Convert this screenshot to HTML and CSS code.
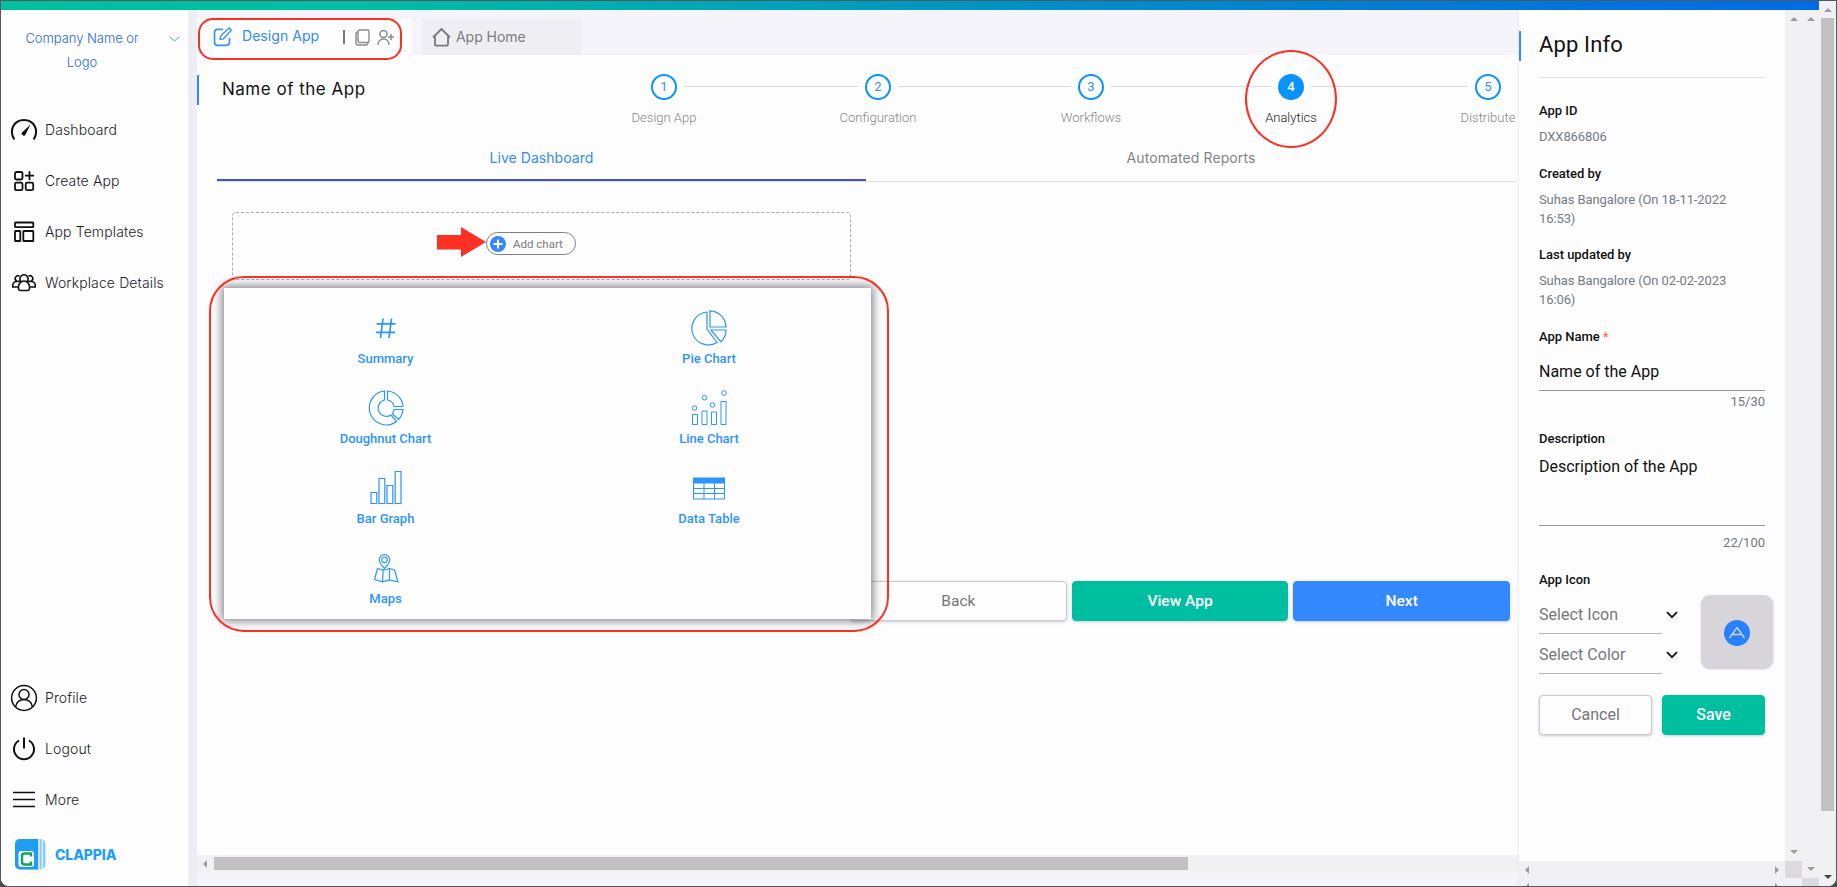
FILE: index.html
```html
<!DOCTYPE html>
<html lang="en">
<head>
<meta charset="utf-8">
<title>Name of the App</title>
<link rel="stylesheet" href="styles.css">
</head>
<body>
<div class="window">
  <div class="page">
    <div class="top-gradient"></div>
    <div class="columns">
      <aside class="sidebar">
        <div class="company"><span class="company-name">Company Name or<br>Logo</span>
          <svg class="company-caret" width="11" height="8" viewBox="0 0 11 8"><path d="M1 2l4.500 4 4.500-4" fill="none" stroke="#3e9bf5" stroke-width="1"/></svg>
        </div>
        <nav class="nav">
          <a class="nav-item"><svg width="28" height="28" viewBox="0 0 28 28" fill="none" stroke="#111" stroke-width="2"><path d="M4.300 23.500C-1.500 14 4 4 14 4s15.500 10 9.700 19.500"/><path d="M20.500 8.500l-8 7.500a2 2 0 1 0 3 2.500z" fill="#111" stroke="none"/></svg><span>Dashboard</span></a>
          <a class="nav-item"><svg width="28" height="28" viewBox="0 0 28 28" fill="none" stroke="#111" stroke-width="1.800"><rect x="5" y="5" width="7.500" height="7.500" rx="1.500"/><rect x="5" y="15.700" width="7.500" height="7.500" rx="1.500"/><rect x="15.700" y="15.700" width="7.500" height="7.500" rx="1.500"/><path d="M19.500 4.200v9M15 8.700h9"/></svg><span>Create App</span></a>
          <a class="nav-item"><svg width="28" height="28" viewBox="0 0 28 28" fill="none" stroke="#111" stroke-width="1.800"><rect x="5" y="4.500" width="18.300" height="4.700" rx=".6"/><rect x="5" y="13" width="5.300" height="10" rx=".6"/><rect x="13.300" y="13" width="10" height="10" rx=".6"/></svg><span>App Templates</span></a>
          <a class="nav-item"><svg width="28" height="28" viewBox="0 0 28 28" fill="none" stroke="#111" stroke-width="1.600"><path d="M10.700 12.200a4 4 0 1 1 6.600 0M8.500 19.500C7.500 9.500 20.500 9.500 19.500 19.500q0 2-2 2h-7q-2 0-2-2z"/><path d="M10 11.500a2.800 2.800 0 1 1-.500-4.300M18 11.500a2.800 2.800 0 1 0 .500-4.300M8 18H2.800c-.5-3.500 1-5.500 4-5.800M20 18h5.200c.5-3.500-1-5.500-4-5.800"/></svg><span>Workplace Details</span></a>
        </nav>
        <nav class="nav nav-bottom">
          <a class="nav-item"><svg width="28" height="28" viewBox="0 0 28 28" fill="none" stroke="#111" stroke-width="1.500"><circle cx="14" cy="14" r="12.400"/><circle cx="14" cy="10.500" r="5"/><path d="M5.500 23c1-10 16-10 17 0"/></svg><span>Profile</span></a>
          <a class="nav-item"><svg width="28" height="28" viewBox="0 0 28 28" fill="none" stroke="#111" stroke-width="2"><path d="M9 5.500a10 10 0 1 0 10 0M14 2.500v11"/></svg><span>Logout</span></a>
          <a class="nav-item"><svg width="28" height="28" viewBox="0 0 28 28" fill="none" stroke="#111" stroke-width="1.700"><path d="M3 6.500h22M3 13.500h22M3 20.500h22"/></svg><span>More</span></a>
        </nav>
        <div class="brand">
          <svg width="32" height="31" viewBox="0 0 32 31"><rect width="30.500" height="30.500" rx="5" fill="#8ccbfa"/><path d="M5 0h18v30.500H5a5 5 0 0 1-5-5V5a5 5 0 0 1 5-5z" fill="#1f9df1"/><path d="M24 0v30.500M27.300 0v30.500" stroke="#fff" stroke-width="1"/><rect x="3.500" y="12" width="15.500" height="16" rx="3" fill="#fff"/><path d="M16 17.500v-3H9.500q-2.500 0-2.500 2.500v6q0 2.500 2.500 2.500H16v-3" fill="none" stroke="#10a267" stroke-width="2.500"/></svg>
          <span>CLAPPIA</span>
        </div>
      </aside>

      <main class="main">
        <div class="tabbar">
          <div class="tab tab-active">
            <svg class="edit" width="20" height="20" viewBox="0 0 20 20" fill="none" stroke="#3593f7" stroke-width="1.700"><path d="M10 2.300H4.500Q1.500 2.300 1.500 5.300v10q0 3 3 3h9q3 0 3-3V11"/><path d="M7 12.500l.6-3.500 8.500-8 2.300 2.300-8 8.500z" stroke-width="1.300"/></svg>
            <span class="tab-title">Design App</span><i class="tab-sep"></i>
            <svg class="copy" width="15" height="17" viewBox="0 0 15 17" fill="none" stroke="#8b8b90" stroke-width="1.400"><rect x="3" y="1" width="11" height="12.500" rx="1.500"/><path d="M3 3Q1 3 1 5v9q0 2 2 2h8q1.500 0 2-2"/></svg>
            <svg class="adduser" width="18" height="17" viewBox="0 0 18 17" fill="none" stroke="#8b8b90" stroke-width="1.500"><circle cx="6.500" cy="5" r="3.500"/><path d="M1 16c0-8 11-8 11 0M14 5v6M11 8h6"/></svg>
          </div>
          <div class="tab tab-home">
            <svg width="20" height="20" viewBox="0 0 20 20" fill="none" stroke="#77777c" stroke-width="1.800" stroke-linejoin="round"><path d="M1 10.500l8.500-8.500 8.500 8.500M3 9.500v7.500q0 1.700 1.700 1.700h9.600q1.700 0 1.700-1.700V9.500"/></svg>
            <span>App Home</span>
          </div>
        </div>
        <div class="content">
          <header class="app-head">
            <h1 class="app-title">Name of the App</h1>
            <ol class="steps">
              <li class="step"><b>1</b><span>Design App</span></li><li class="bar b1"></li>
              <li class="step"><b>2</b><span>Configuration</span></li><li class="bar b2"></li>
              <li class="step"><b>3</b><span>Workflows</span></li><li class="bar b3"></li>
              <li class="step current"><b>4</b><span>Analytics</span></li><li class="bar b4"></li>
              <li class="step last"><b>5</b><span>Distribute</span></li>
            </ol>
          </header>
          <div class="subtabs"><a class="subtab on">Live Dashboard</a><a class="subtab">Automated Reports</a></div>
          <div class="dropzone">
            <button class="add-chart"><svg width="16" height="16" viewBox="0 0 16 16"><circle cx="8" cy="8" r="8" fill="#3488fb"/><path d="M8 3.500v9M3.500 8h9" stroke="#fff" stroke-width="2"/></svg><span>Add chart</span></button>
          </div>
          <div class="actions"><button class="btn">Back</button><button class="btn green">View App</button><button class="btn blue">Next</button></div>
        </div>
        <div class="hscroll"><i class="arrow left"></i><i class="hthumb"></i></div>

        <div class="chart-menu">
          <div class="chart"><svg width="36" height="36" viewBox="0 0 36 36" fill="none" stroke="#2c95fb" stroke-width="1.700"><path d="M15 8.500l-2.500 19.500M23.500 8.500l-2.500 19.500M8.500 13.800h19M8 22.300h19"/></svg><span>Summary</span></div>
          <div class="chart"><svg width="36" height="36" viewBox="0 0 36 36" fill="none" stroke="#2c95fb" stroke-width="1.200"><path d="M16 2A16.500 16.500 0 1 0 26 32.500L16 19z"/><path d="M19 .8V17h16A16.500 16.500 0 0 0 19 .8z"/><path d="M20 20h15a16 16 0 0 1-5 11.800z"/></svg><span>Pie Chart</span></div>
          <div class="chart"><svg width="36" height="36" viewBox="0 0 36 36" fill="none" stroke="#2c95fb" stroke-width="1.200"><path d="M16.500 1A17 17 0 1 0 28.500 31.500L23 25A8.300 8.300 0 1 1 16.500 10z"/><path d="M19.500 1V10A8.300 8.300 0 0 1 26 16.500h9A17 17 0 0 0 19.500 1z"/><path d="M26 19.500h9a17 17 0 0 1-4.500 10L24.500 24z"/></svg><span>Doughnut Chart</span></div>
          <div class="chart"><svg width="36" height="36" viewBox="0 0 36 36" fill="none" stroke="#2c95fb" stroke-width="1"><path d="M1.500 24.500h5v10h-5zM11 21h5v13.500h-5zM20.500 22h5v12.500h-5zM30 11.500h5v23h-5z"/><circle cx="3.500" cy="18" r="2.300"/><circle cx="13.500" cy="7.700" r="2.300"/><circle cx="21.500" cy="15" r="2.300"/><circle cx="33" cy="3" r="2.300"/></svg><span>Line Chart</span></div>
          <div class="chart"><svg width="36" height="36" viewBox="0 0 36 36" fill="none" stroke="#2c95fb" stroke-width="1.200"><path d="M3 22.500h5.800v11H3zM11 8.500h5.800v25H11zM19 15.500h5.800v18H19zM27.200 1.500H33v32h-5.800z"/></svg><span>Bar Graph</span></div>
          <div class="chart"><svg width="36" height="36" viewBox="0 0 36 36" fill="none" stroke="#2c95fb" stroke-width="1"><path d="M2.500 8.500h31v20.500h-31zM2.500 18.500h31M2.500 23.500h31M13 12v17M23.500 12v17"/><path d="M2 7.500h32v6H2z" fill="#2c95fb" stroke="none"/></svg><span>Data Table</span></div>
          <div class="chart"><svg width="36" height="36" viewBox="0 0 36 36" fill="none" stroke="#2c95fb" stroke-width="1.200" stroke-linejoin="round"><path d="M16.500 18.500Q11.200 13 11.200 10a5.300 5.300 0 0 1 10.600 0q0 3-5.300 8.500z"/><circle cx="16.500" cy="9.800" r="2.800"/><path d="M13 19.300l-3.500-.8-3 11 8 2.300 7-2 8.500 2.200-3.500-12-5-1.500-4.500 1.500-4-.7M14.500 31.800l.7-12M21.500 29.800V19"/></svg><span>Maps</span></div>
        </div>
      </main>

      <section class="info">
        <div class="info-body">
          <h2 class="info-title">App Info</h2>
          <div class="label l-first">App ID</div><div class="value">DXX866806</div>
          <div class="label">Created by</div><div class="value">Suhas Bangalore (On 18-11-2022 16:53)</div>
          <div class="label l-upd">Last updated by</div><div class="value">Suhas Bangalore (On 02-02-2023 16:06)</div>
          <div class="label">App Name <em>*</em></div>
          <div class="input">Name of the App</div><div class="count">15/30</div>
          <div class="label">Description</div>
          <div class="input area">Description of the App</div><div class="count c-area">22/100</div>
          <div class="label">App Icon</div>
          <div class="icon-row">
            <div class="selects">
              <div class="select"><span>Select Icon</span><svg width="12" height="8" viewBox="0 0 12 8"><path d="M1 1.200l5 5 5-5" fill="none" stroke="#111" stroke-width="1.700"/></svg></div>
              <div class="select"><span>Select Color</span><svg width="12" height="8" viewBox="0 0 12 8"><path d="M1 1.200l5 5 5-5" fill="none" stroke="#111" stroke-width="1.700"/></svg></div>
            </div>
            <div class="preview"><svg width="26" height="26" viewBox="0 0 26 26"><circle cx="13" cy="13" r="13" fill="#2681fb"/><path d="M5.500 18L13 7.500 20.500 18M8.500 14.500h9" fill="none" stroke="#d6d4d8" stroke-width="1.300"/></svg></div>
          </div>
          <div class="info-actions"><button class="btn cancel">Cancel</button><button class="btn green save">Save</button></div>
        </div>
        <div class="info-hscroll"><i class="arrow left"></i><i class="arrow right"></i></div>
        <div class="info-hscroll"><i class="arrow left"></i><i class="arrow right"></i></div>
      </section>
      <div class="vtrack inner"><i class="arrow up"></i><i class="arrow down"></i><i class="corner"></i></div>
      <div class="vtrack middle"><i class="arrow up"></i><i class="arrow down"></i><i class="corner"></i></div>
    </div>
  </div>
  <div class="vtrack outer"><i class="arrow up"></i><i class="vthumb"></i><i class="arrow down dark"></i></div>

  <div class="mark mark-tab"></div>
  <div class="mark mark-step"></div>
  <div class="mark mark-menu"></div>
  <svg class="mark-arrow" width="50" height="30" viewBox="0 0 50 30"><path d="M0 8h24V0l25 15-25 15V22.500H0z" fill="#fd3123"/></svg>
</div>
</body>
</html>
```

FILE: styles.css
```css
* { box-sizing: border-box; }
body { margin: 0; background: #4b4a4e; font-family: Roboto, sans-serif; color: #111; overflow: hidden; }
h1, h2, ol { margin: 0; padding: 0; font-weight: 400; list-style: none; }
svg { display: block; flex: none; }
button { font-family: inherit; }

.window { position: relative; width: 1837px; height: 887px; border: 1px solid #57565a; border-radius: 0 0 9px 9px; display: flex; overflow: hidden; background: #f5f4fa; }
.page { width: 1818px; display: flex; flex-direction: column; }
.top-gradient { height: 9px; flex: none; background: linear-gradient(90deg, #00c09f 0%, #00bda4 20%, #008fc8 58%, #007ad8 80%, #006be8 100%); }
.columns { flex: none; height: 876px; display: flex; overflow: hidden; }

/* Sidebar */
.sidebar { width: 187px; background: #fdfdfe; display: flex; flex-direction: column; font-family: Inter, sans-serif; }
.company { display: flex; height: 94px; padding: 16px 8px 0 16px; justify-content: space-between; }
.company-name { width: 130px; text-align: center; font-size: 13px; font-weight: 350; line-height: 24px; color: #2568da; white-space: nowrap; letter-spacing: -.05px; }
.company-caret { margin-top: 9px; }
.nav-item { display: flex; align-items: center; height: 51px; padding-left: 9px; gap: 7px; font-size: 14px; font-weight: 300; letter-spacing: .12px; color: #1c1c1f; }
.nav-bottom { margin-top: 364px; }
.brand { display: flex; align-items: center; gap: 8px; padding: 14px 0 0 14px; font: 800 14px/31px Inter, sans-serif; letter-spacing: -.1px; color: #22a0f7; }

/* Main column */
.main { position: relative; width: 1322px; margin-left: 9px; display: flex; flex-direction: column; box-shadow: -9px 0 0 #eeedf3; }
.tabbar { height: 45px; padding-top: 9px; display: flex; gap: 10px; background: #f5f4fb; }
.tab { display: flex; align-items: center; height: 36px; }
.tab-active { width: 215px; padding-left: 16px; background: #fdfdfe; }
.tab-title { margin: -2px 0 0 9px; width: 101px; font: 14px/20px Inter, sans-serif; letter-spacing: .05px; color: #318af9; }
.tab-sep { width: 2px; height: 14px; background: #77777c; }
.copy { margin-left: 10px; }
.adduser { margin-left: 7px; }
.tab-home { width: 160px; padding-left: 11px; gap: 3px; background: #efeef3; font: 14px Inter, sans-serif; color: #7b7b80; }
.tab-home svg { margin-left: -1px; margin-right: 1px; }
.tab-home span { margin-top: -1px; letter-spacing: -.05px; }
.content { flex: 1; background: #fdfdfe; }
.app-head { display: flex; padding-top: 20px; height: 81px; }
.app-title { flex: none; width: 352px; height: 30px; padding-left: 23px; border-left: 2px solid #3488fb; font: 17px/28px Inter, sans-serif; letter-spacing: .5px; }
.steps { display: flex; margin: -1px 0 0 75px; }
.step { flex: none; width: 80px; display: flex; flex-direction: column; align-items: center; font-weight: 300; font-size: 13px; color: #858589; white-space: nowrap; }
.step b { width: 26px; height: 26px; border: 2px solid #0993fd; border-radius: 50%; text-align: center; font: 13px/22px Roboto, sans-serif; color: #2f93f2; }
.step span { margin-top: 10px; line-height: 16px; }
.current { color: #222; }
.current b { background: #0993fd; color: #fff; font-weight: 500; }
.bar { flex: none; height: 1px; margin: 12px -20px 0; background: #dcdcdf; }
.b1 { width: 174px; } .b2 { width: 173px; } .b3 { width: 160px; } .b4 { width: 157px; }
.subtabs { display: flex; width: 1299px; margin-left: 20px; height: 46px; border-bottom: 1px solid #dcdce2; }
.subtab { width: 650px; height: 45px; padding-top: 12px; text-align: center; font: 14px/20px Inter, sans-serif; color: #838387; letter-spacing: .1px; }
.subtab.on { width: 649px; color: #318af9; border-bottom: 2px solid #3f56b5; letter-spacing: .05px; }
.dropzone { width: 619px; height: 68px; margin: 30px 0 0 35px; border: 1px dashed #aaaaad; border-radius: 4px; padding-left: 253px; display: flex; align-items: center; padding-bottom: 5px; }
.add-chart { width: 90px; height: 23px; display: flex; align-items: center; gap: 7px; padding: 0 0 0 3px; border: 1px solid #7f7f84; border-radius: 12px; background: #fdfdfe; font-size: 11.500px; color: #7c7c80; white-space: nowrap; }
.actions { display: flex; gap: 5px; margin: 301px 0 0 653px; width: 660px; }
.btn { flex: 1; height: 40px; padding: 0; border: 1px solid #c9c9cd; border-radius: 4px; background: #fdfdfe; color: #747579; font-size: 16px; box-shadow: 0 1px 3px rgba(60, 60, 80, .25); }
.actions .btn { padding-bottom: 1px; font-size: 15.500px; }
.btn.green { background: #00bfa0; border-color: #00bfa0; color: #fff; font-weight: 500; }
.btn.blue { background: #3488fe; border-color: #3488fe; color: #fff; font-weight: 500; }
.hscroll { height: 31px; background: linear-gradient(#f1f0f3 16px, #f5f4fa 18px); display: flex; padding: 2px 0 0 6px; }
.hthumb { width: 974px; height: 13px; margin-left: 7px; background: #c2c0c3; }
.hscroll .left { margin-top: 3px; }

/* Chart picker */
.chart-menu { position: absolute; left: 27px; top: 278px; width: 647px; height: 331px; padding: 22px 0 0; background: #fdfdfe; box-shadow: 0 0 9px 2px rgba(50, 50, 60, .6); display: grid; grid-template-columns: 323px 324px; grid-auto-rows: 80px; }
.chart { display: flex; flex-direction: column; align-items: center; gap: 4px; font-size: 13px; font-weight: 500; line-height: 18px; color: #2c95fb; }

/* App Info panel */
.info { width: 266px; display: flex; flex-direction: column; background: #f1f0f3; box-shadow: -1px 0 2px #ececf2; z-index: 1; overflow: hidden; }
.info-body { height: 851px; flex: none; padding: 0 20px; background: #fdfdfe; position: relative; }
.info-body::before { content: ""; position: absolute; left: 0; top: 21px; width: 2px; height: 30px; background: #3488fb; }
.info-title { height: 68px; border-bottom: 1px solid #dfdfe2; font-size: 22px; line-height: 69px; letter-spacing: .15px; }
.label { height: 20px; margin-top: 16px; font-size: 13px; font-weight: 500; line-height: 21px; letter-spacing: -.03px; }
.label em { color: #ff6b57; font-style: normal; }
.l-first { margin-top: 22px; }
.l-upd { margin-top: 15px; }
.value { margin-top: 7px; font-size: 13px; line-height: 19.500px; letter-spacing: -.1px; color: #737c86; }
.input { height: 45px; border-bottom: 1px solid #97979b; font-size: 16px; line-height: 52px; }
.area { height: 78px; line-height: 37px; }
.count { height: 20px; margin-top: 1px; text-align: right; font-size: 13px; line-height: 20px; color: #73777d; }
.c-area { margin-top: 7px; }
.icon-row { display: flex; margin-right: -8px; padding-top: 5px; justify-content: space-between; }
.select { display: flex; width: 139px; height: 40px; align-items: center; }
.select span { width: 123px; height: 40px; line-height: 42px; border-bottom: 1px solid #b5b5b9; font-size: 16px; letter-spacing: .05px; color: #77777b; }
.select svg { margin: 2px 0 0 4px; }
.preview { width: 72px; height: 73px; margin-top: 1px; padding-top: 3px; border-radius: 9px; background: #d7d5d9; box-shadow: 0 1px 2px #c5bdec; display: flex; align-items: center; justify-content: center; }
.info-actions { display: flex; gap: 10px; margin-top: 21px; }
.cancel { flex: 0 0 113px; }
.info-hscroll { height: 17px; flex: none; display: flex; justify-content: space-between; align-items: center; padding: 0 6px; }

/* Scroll tracks */
.arrow { width: 0; height: 0; border: 4px solid transparent; flex: none; }
.up { border-width: 0 4px 4px; border-bottom-color: #9d9ca0; }
.down { border-width: 4px 4px 0; border-top-color: #9d9ca0; }
.left { border-width: 4px 4px 4px 0; border-right-color: #9d9ca0; }
.right { border-width: 4px 0 4px 4px; border-left-color: #9d9ca0; }
.dark { border-top-color: #444; }
.vtrack { width: 17px; display: flex; flex-direction: column; align-items: center; background: #f1f0f3; }
.inner, .middle, .outer { padding-top: 7px; }
.corner { width: 17px; height: 17px; flex: none; margin-top: 7px; background: #dcdadd; }
.inner .down { margin-top: 829px; }
.middle .down { margin-top: 846px; }
.vthumb { width: 13px; height: 793px; margin-top: 6px; background: #c2c0c3; }
.outer .down { margin-top: 64px; }

/* Callouts laid over the page */
.mark { position: absolute; border: 2px solid #fa3122; }
.mark-tab { left: 197px; top: 17px; width: 204px; height: 42px; border-radius: 15px; }
.mark-step { left: 1244px; top: 49px; width: 92px; height: 98px; border-radius: 50%; }
.mark-menu { left: 208px; top: 275px; width: 680px; height: 356px; border-radius: 35px; }
.mark-arrow { position: absolute; left: 436px; top: 226px; }
```
